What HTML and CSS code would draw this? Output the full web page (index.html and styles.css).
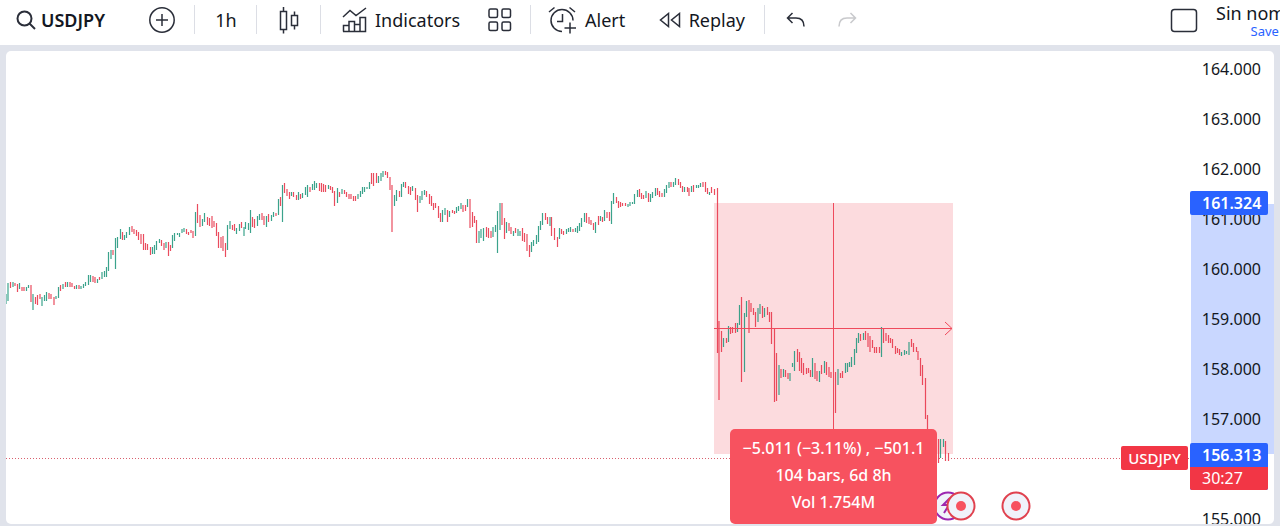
FILE: index.html
```html
<!DOCTYPE html>
<html lang="en">
<head>
  <meta charset="UTF-8">
  <meta name="viewport" content="width=device-width, initial-scale=1.0">
  <title>USDJPY</title>
  <link rel="stylesheet" href="styles.css">
</head>
<body>
  <header class="toolbar">
    <div class="group group-symbol">
      <button class="tool symbol">
        <svg width="20" height="20" viewBox="0 0 20 20" stroke-width="2"><circle cx="8.5" cy="8.5" r="7"/><path d="M13.5 13.5l5.5 5.5"/></svg>
        USDJPY
      </button>
      <button class="tool" aria-label="Compare">
        <svg width="26" height="26" viewBox="0 0 26 26"><circle cx="13" cy="13" r="12.2"/><path d="M13 7v12M7 13h12"/></svg>
      </button>
    </div>
    <div class="group group-interval">
      <button class="tool">1h</button>
    </div>
    <div class="group group-style">
      <button class="tool" aria-label="Candles">
        <svg width="20" height="28" viewBox="0 0 20 28"><path d="M1.5 5.5h6v18h-6zM4.5 1v4.5M4.5 23.5v4M12.500 9.500h6v10h-6zM15.500 5.500v4M15.500 19.500v4"/></svg>
      </button>
    </div>
    <div class="group group-indicators">
      <button class="tool">
        <svg width="25" height="26" viewBox="0 0 25 26"><path d="M1 10l7-6.500 6 5L24 1M1.500 24.500v-6h5.500v6M7 24.500v-10h5.500v10M12.500 24.500v-7h5.500M18 24.500v-14h5.500v14zM1 24.500h17"/></svg>
        Indicators
      </button>
      <button class="tool" aria-label="Layouts">
        <svg width="24" height="24" viewBox="0 0 24 24"><rect x="1" y="1" width="8.500" height="8.500" rx="1.500"/><rect x="14" y="1" width="8.500" height="8.500" rx="1.500"/><rect x="1" y="14" width="8.500" height="8.500" rx="1.500"/><rect x="14" y="14" width="8.500" height="8.500" rx="1.500"/></svg>
      </button>
    </div>
    <div class="group group-alert">
      <button class="tool">
        <svg width="29" height="28" viewBox="0 0 29 28"><path d="M14 25.500A11 11 0 1 1 25 14.500M14.500 8v7.500H9M1 6l5.500-4.500M21.500 1.500L27 6M22 16.500v11M16.500 22h11.500"/></svg>
        Alert
      </button>
      <button class="tool">
        <svg width="22" height="16" viewBox="0 0 22 16"><path d="M9.500 1.500v13L1.500 8zM20.500 1.500v13L12.500 8z"/></svg>
        Replay
      </button>
    </div>
    <div class="group group-history">
      <button class="tool" aria-label="Undo">
        <svg width="19" height="16" viewBox="0 0 19 16"><path d="M6.500 1L1.500 6l5 5M1.500 6h8.500c5 0 8 3 8 8.500"/></svg>
      </button>
      <button class="tool" aria-label="Redo" disabled>
        <svg width="19" height="16" viewBox="0 0 19 16"><path d="M12.500 1l5 5-5 5M17.500 6H9c-5 0-8 3-8 8.500"/></svg>
      </button>
    </div>
    <div class="group group-layout">
      <button class="tool" aria-label="Select layout">
        <svg width="28" height="25" viewBox="0 0 28 25"><rect x="1.500" y="1.500" width="25" height="22" rx="3"/></svg>
      </button>
      <button class="tool layout-name">
        <span>Sin nombre</span>
        <span class="save">Save</span>
      </button>
    </div>
  </header>

  <main class="chart">
    <div class="plot">
      <svg class="canvas" width="100%" height="100%">
        <rect class="range" x="708" y="152" width="239" height="251"/>
        <path id="up" class="up"/>
        <path id="down" class="down"/>
        <path class="arrow" d="M708 277.500h238M939 271l7 6.500-7 6.500M827.500 152v227"/>
        <line class="last" x1="0" y1="407.500" x2="100%" y2="407.500"/>
        <g class="event news">
          <circle cx="942" cy="455" r="13.500"/>
          <path d="M944 447l-7 7h6l-5 8"/>
        </g>
        <g class="event">
          <circle cx="955" cy="455" r="13.500"/>
          <circle class="dot" cx="955" cy="455" r="5"/>
        </g>
        <g class="event">
          <circle cx="1010" cy="455" r="13.500"/>
          <circle class="dot" cx="1010" cy="455" r="5"/>
        </g>
      </svg>
      <div class="measure">
        <div>−5.011 (−3.11%) , −501.1</div>
        <div>104 bars, 6d 8h</div>
        <div>Vol 1.754M</div>
      </div>
      <div class="ticker">USDJPY</div>
    </div>
    <div class="axis">
      <div class="axis-range"></div>
      <ul class="prices">
        <li>164.000</li>
        <li>163.000</li>
        <li>162.000</li>
        <li>161.000</li>
        <li>160.000</li>
        <li>159.000</li>
        <li>158.000</li>
        <li>157.000</li>
        <li></li>
        <li>155.000</li>
      </ul>
      <div class="tag tag-start">161.324</div>
      <div class="tag tag-end">156.313<span class="countdown">30:27</span></div>
    </div>
  </main>

  <script src="script.js"></script>
</body>
</html>
```
FILE: styles.css
```css
* {
  box-sizing: border-box;
}

body {
  margin: 0;
  height: 100vh;
  display: flex;
  flex-direction: column;
  overflow: hidden;
  background-color: #e0e3eb;
  color: #131722;
  font-family: "Trebuchet MS", "Noto Sans", sans-serif;
  font-size: 18px;
}

/* Toolbar */
.toolbar {
  flex: none;
  display: flex;
  height: 45px;
  padding-bottom: 5px;
  overflow: hidden;
  background-color: white;
}

.group {
  position: relative;
  flex: none;
  display: flex;
  align-items: center;
  justify-content: space-between;
}

/* separator at the right of a group */
.group::after {
  content: "";
  position: absolute;
  right: 0;
  top: 5px;
  bottom: 6px;
  width: 1px;
  background-color: #dcdee5;
}

.group-history::after,
.group-layout::after {
  display: none;
}

.group-symbol {
  width: 195px;
  padding: 0 20px 0 16px;
}

.group-interval {
  width: 62px;
  justify-content: center;
}

.group-style {
  width: 64px;
  justify-content: center;
}

.group-indicators {
  width: 210px;
  padding: 0 19px 0 21px;
}

.group-alert {
  width: 234px;
  padding: 0 20px 0 17px;
}

.group-history {
  width: 112px;
  padding: 0 20px 0 21px;
}

.group-layout {
  width: 110px;
  margin-left: auto;
  gap: 18px;
  justify-content: flex-start;
}

.tool {
  flex: none;
  display: flex;
  align-items: center;
  gap: 8px;
  padding: 0;
  border: 0;
  background: none;
  color: inherit;
  font: inherit;
  line-height: 24px;
  cursor: pointer;
}

.tool svg {
  fill: none;
  stroke: #2a2e39;
}

.tool svg:not([stroke-width]) {
  stroke-width: 1.5;
}

.tool:disabled {
  opacity: 0.25;
}

.symbol {
  gap: 5px;
  font-weight: 600;
}

.layout-name {
  flex-direction: column;
  gap: 0;
  line-height: 22px;
}

.save {
  color: #2962ff;
  font-size: 13px;
  line-height: 14px;
}

/* Chart */
.chart {
  flex: 1;
  display: flex;
  margin: 6px 6px 2px 6px;
  overflow: hidden;
  border-radius: 5px;
  background-color: white;
}

.plot {
  position: relative;
  flex: 1;
}

.canvas {
  position: absolute;
  inset: 0;
  fill: none;
}

.range {
  fill: #fcdbde;
}

.up,
.down {
  stroke-opacity: 0.9;
  stroke-width: 1.2;
}

.up {
  stroke: #26997f;
}

.down {
  stroke: #e8384d;
}

.arrow {
  stroke: #ef4a5c;
}

.last {
  stroke: #d9606e;
  stroke-dasharray: 1 2;
}

.event circle {
  fill: #f0f3fa;
  stroke: #e0424f;
  stroke-width: 2;
}

.event .dot {
  fill: #f7525f;
  stroke: none;
}

.news circle,
.news path {
  stroke: #9c27b0;
  stroke-width: 2;
}

.measure {
  position: absolute;
  left: 724px;
  bottom: 0;
  width: 207px;
  padding: 6px 0 8px;
  border-radius: 5px;
  background-color: #f7525f;
  color: white;
  font-size: 16px;
  font-weight: 500;
  line-height: 27px;
  text-align: center;
  white-space: nowrap;
}

.ticker {
  position: absolute;
  right: 2px;
  top: 395px;
  width: 67px;
  border-radius: 2px;
  background-color: #f23645;
  color: white;
  font-size: 15px;
  font-weight: 500;
  line-height: 24px;
  text-align: center;
}

/* Price scale */
.axis {
  position: relative;
  flex: none;
  width: 84px;
  font-size: 16px;
}

.axis-range {
  position: absolute;
  left: 1px;
  right: 0;
  top: 153px;
  height: 250px;
  background-color: #c9d7ff;
}

.prices {
  position: relative;
  margin: 0;
  padding: 0 13px 0 0;
  list-style: none;
  text-align: right;
}

.prices li {
  height: 50px;
  line-height: 37px;
}

.tag {
  position: absolute;
  left: 0;
  width: 78px;
  padding-left: 12px;
  border-radius: 2px;
  background-color: #2962ff;
  color: white;
  font-weight: 600;
  line-height: 24px;
}

.tag-start {
  top: 140px;
}

.tag-end {
  top: 392px;
}

.countdown {
  display: block;
  margin-left: -12px;
  padding-left: 12px;
  border-radius: 0 0 2px 2px;
  background-color: #f23645;
  font-weight: 400;
  line-height: 23px;
}
```
FILE: script.js
```js
// One entry per bar: direction, x, high, low
const bars = `
+6,294,304 +8,283,301 -10.5,282,288 +13,282,287 -15,283,286 -17.5,284,292 +19.5,283,289 -22,287,291
-24,287,291 +26.5,287,291 +28.5,285,288 -31,285,302 +33,294,310 -35.5,297,304 -37.5,295,305 -40,294,299
+42,297,306 +44.5,295,301 +46.5,292,301 -49,293,299 -51,294,299 -54,297,305 +56,296,299 +58.5,287,298
-60.5,285,291 +63,284,289 -65.5,282,287 +67.5,282,287 -70,282,287 -72,283,287 -74.5,286,289 +76.5,285,289
-79,285,289 +81,286,289 +83.5,284,288 +85.5,282,286 +88.5,275,285 +90.5,275,282 -93,276,282 -95,277,283
+97.5,279,283 -99.5,277,280 +102,272,279 +104.5,271,277 +106.5,267,277 +108.5,252,271 +111,250,259 -113,250,255
+115.5,238,269 +117.5,237,248 +120.5,229,239 -122.5,232,240 +124.5,235,240 +126.5,232,238 +129.5,227,235
-132,226,232 -134,229,234 -136.5,230,236 -138.5,232,240 -141,234,244 -143.5,234,250 -145.5,243,250
-147.5,244,250 -150.5,247,255 +152.5,247,254 +154.5,245,254 +156.5,241,250 +159.5,239,243 -161.5,240,246
-164,243,250 +166,242,248 -168.5,242,256 -170.5,245,251 +172.5,235,248 +174.5,233,241 +177.5,233,235
+179.5,233,237 +182,229,233 +184,228,232 -186.5,229,234 -188.5,232,235 -191,230,233 -193,231,238
+195.5,212,236 -197.5,204,223 -200,215,227 +202.5,219,226 +204.5,213,222 -207.5,217,225 -209.5,218,226
-212,216,228 -214,221,227 -216.5,223,236 -218.5,232,248 -221,237,248 -223,236,251 -225.5,243,257
+227.5,225,250 +230,221,229 -232.5,225,230 -234.5,224,231 +236.5,228,234 +239.5,224,231 -241.5,222,228
+244,227,236 +245.5,222,229 +248.5,223,230 +250.5,210,233 -252.5,217,227 -254.5,219,228 +257.5,216,226
+259.5,214,220 -262,213,220 -264,216,225 +266.5,216,227 -268.5,214,222 +271.5,215,221 +273.5,212,217
-276,213,216 +278.5,199,215 -280.5,197,206 +282.5,185,222 -284.5,183,193 -287,189,196 -289.5,192,199
+291.5,192,196 -293.5,192,197 -296.5,195,200 +298.5,192,200 -300.5,194,199 +302.5,193,198 +305.5,187,195
+307.5,185,197 -310,187,192 +312.5,184,190 +314.5,181,190 +316.5,183,188 -319.5,183,191 -321.5,183,192
-323.5,184,192 -325.5,185,192 +328.5,185,189 -330.5,186,190 -332.5,187,193 -334.5,191,206 +337.5,188,203
-339.5,192,197 +342,189,194 -344.5,190,194 -346.5,192,197 -349,194,199 -351,194,199 -353.5,196,201
-355.5,196,201 +358,194,199 +360.5,191,197 +362.5,187,194 +364.5,187,192 +367,187,189 +369.5,182,189
-371.5,173,184 -373.5,173,186 -376.5,173,183 +378.5,176,183 +381,173,181 +383,171,177 -385.5,171,175
-387.5,172,178 -390,177,190 -392,185,232 +394.5,195,206 +396.5,190,201 -399.5,191,197 +401.5,184,197
+403.5,182,187 -405.5,182,188 -408.5,186,194 -410.5,187,195 +412.5,186,191 -415.5,188,200 -417.5,195,212
+420,196,203 +422,191,200 +424.5,190,195 -426.5,191,197 -429.5,194,204 -431.5,196,206 -433.5,203,210
-435.5,203,208 -438.5,206,218 -440.5,213,222 +442.5,210,222 +445,208,215 -447.5,210,222 +449.5,211,217
-452.5,210,213 -454.5,211,214 +456.5,207,213 +458.5,206,211 +461,203,209 -463,205,212 -465.5,205,211
+467.5,199,207 -470,199,228 -472.5,212,227 -474.5,216,223 -476.5,220,243 +479,231,243 +481,229,238
+483.5,228,241 -486.5,227,237 -488.5,228,238 -491,231,238 +493,227,237 +495.5,225,232 +497.5,211,253
+500,203,230 -502,203,225 -504.5,218,239 +506.5,222,233 -509,223,231 -511,227,234 +513.5,231,236
-515.5,228,233 +518,229,236 +520,231,236 -522.5,228,241 -524.5,233,242 -527,234,251 -529.5,245,257
+531.5,242,252 +533.5,240,246 +536.5,235,244 +538.5,226,242 +540.5,221,230 +542.5,213,225 -545.5,213,220
-547.5,217,224 +550,217,226 -551.5,217,236 -554.5,228,240 -557.5,237,247 +559.5,228,239 -561.5,229,234
-563.5,231,235 +566.5,229,234 +568.5,228,232 +570.5,227,232 -573,229,232 +575.5,228,232 +577.5,226,233
+579.5,223,231 +581.5,218,227 +584.5,213,222 -586.5,213,223 -589,217,224 -591,220,225 -593.5,223,230
+595.5,222,233 -598.5,216,225 +600.5,216,221 -602.5,217,222 +604.5,210,221 -607,212,218 -609.5,212,221
+611.5,201,224 +613.5,193,204 -616.5,197,203 -618.5,201,208 -620.5,202,207 -622.5,203,206 -625.5,203,206
+628,204,207 +630,202,206 +632.5,202,204 +634.5,194,204 +637.5,190,197 -639.5,189,197 -641.5,193,199
-643.5,195,199 +646,191,198 -648.5,193,202 +650.5,194,202 +652.5,192,198 +655.5,188,196 -657.5,188,195
-659.5,191,197 -662,193,197 +664.5,189,197 +666.5,185,193 +669,182,188 -671,182,187 +673.5,182,187
+675.5,178,185 -678.5,179,185 -680.5,182,188 -682.5,186,192 +684.5,187,192 -687.5,187,192 -689,188,196
+691.5,186,192 -693.5,185,192 +696.5,185,188 +698.5,185,188 +700.5,183,187 -703,182,187 -705.5,182,192
-707.5,188,194 +709.5,192,195 -711.5,187,193 -714.5,189,195 -717.5,188,353 -719,321,400 -721.5,331,352
+723.5,338,347 -726.5,338,343 +728.5,326,342 -730.5,327,334 -732.5,327,333 -735.5,323,333 +737.5,323,332
+739.5,305,325 -741.5,297,382 +744.5,313,372 +746.5,301,317 -749,300,333 -751,303,312 -753.5,308,315
-755.5,312,327 +758,308,322 +760,304,314 -762.5,306,318 +764.5,308,317 -767.5,307,315 -769.5,312,322
-771.5,312,344 -774.5,328,402 -776.5,353,401 +779,365,395 -781,369,378 +783.5,369,377 -785.5,370,377
-788,373,379 +790,373,381 +792.5,363,367 +794.5,351,371 -797.5,349,362 -799.5,352,371 -801.5,358,373
-803.5,363,375 -806.5,368,374 -808.5,368,373 -810.5,370,377 +812.5,358,377 -815,363,379 -817,371,381
+819.5,371,382 -821.5,365,374 +824.5,361,373 -826.5,362,375 -829,367,377 -831,372,378 -835.5,372,413
+838,369,385 -840.5,373,378 -842.5,371,378 +845.5,363,373 +847.5,363,372 +849.5,362,367 +851.5,357,367
+854.5,349,365 +856.5,338,353 +858.5,333,343 -860.5,334,341 +863.5,333,340 -865.5,331,340 -868,333,347
-870,336,352 -872.5,340,348 -874.5,347,353 -876.5,347,353 -879.5,347,353 +881.5,327,357 -883.5,328,343
-886,333,341 -888.5,335,343 -890.5,338,343 -892.5,339,348 -895.5,346,354 -897.5,348,353 -899.5,349,355
+901.5,352,356 +904.5,350,355 +906.5,351,354 +909,342,355 -911.5,339,347 -913.5,343,352 -916.5,347,352
-918,351,360 -920.5,358,376 -922.5,365,385 -925.5,378,419 -927.5,415,430 -938.5,439,463 +940.5,439,458
+943.5,439,447 -945.5,441,461 -948.5,453,461`;

// distance from the window corner to the plot
const left = 6;
const top0 = 51;

let up = "";
let down = "";

bars.trim().split(/\s+/).forEach(bar => {
  const [x, high, low] = bar.slice(1).split(",").map(Number);
  const line = `M${x - left} ${high - top0}V${low - top0}`;
  if (bar[0] === "+") up += line;
  else down += line;
});

document.getElementById("up").setAttribute("d", up);
document.getElementById("down").setAttribute("d", down);
```
